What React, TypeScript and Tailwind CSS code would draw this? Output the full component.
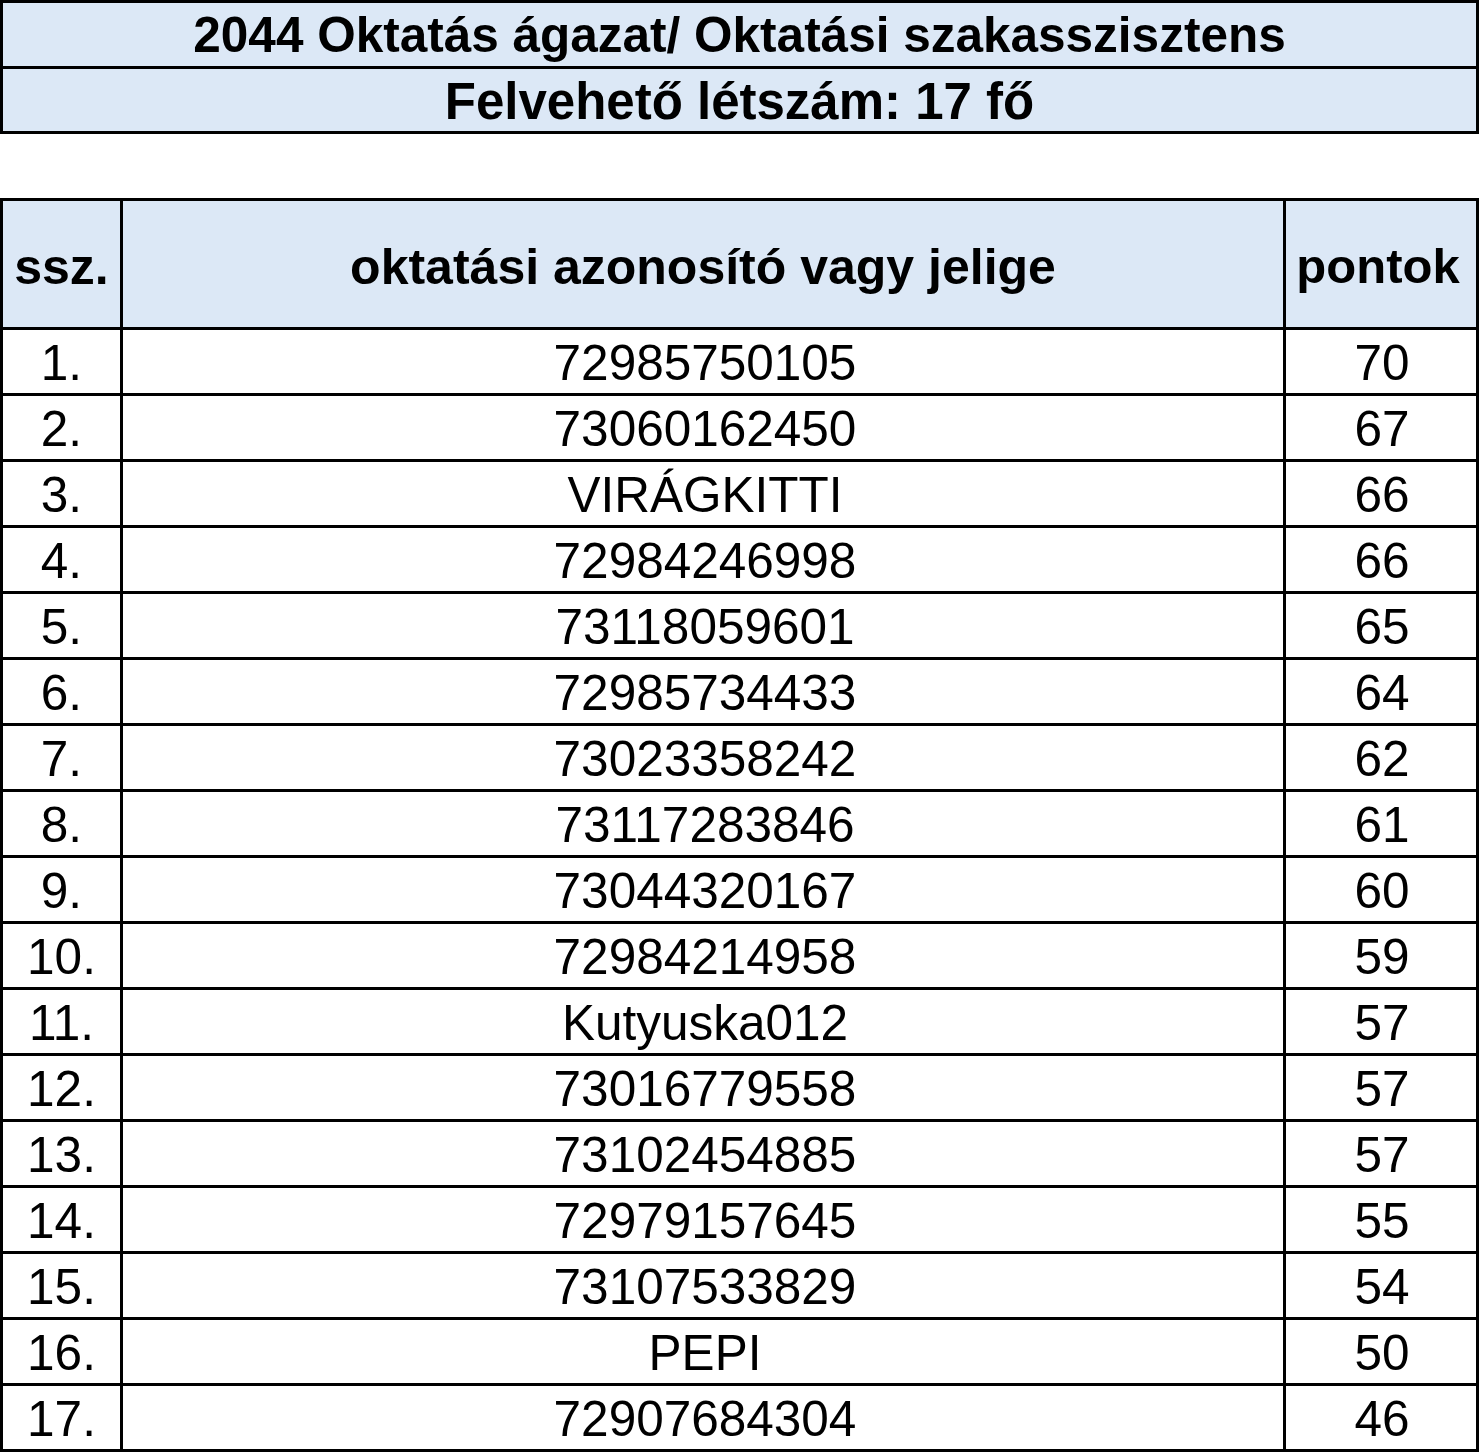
import React from 'react';

const rows: [string, string, number][] = [
  ['1.', '72985750105', 70],
  ['2.', '73060162450', 67],
  ['3.', 'VIRÁGKITTI', 66],
  ['4.', '72984246998', 66],
  ['5.', '73118059601', 65],
  ['6.', '72985734433', 64],
  ['7.', '73023358242', 62],
  ['8.', '73117283846', 61],
  ['9.', '73044320167', 60],
  ['10.', '72984214958', 59],
  ['11.', 'Kutyuska012', 57],
  ['12.', '73016779558', 57],
  ['13.', '73102454885', 57],
  ['14.', '72979157645', 55],
  ['15.', '73107533829', 54],
  ['16.', 'PEPI', 50],
  ['17.', '72907684304', 46],
];

const App = () => (
  <div
    className="bg-white w-[1480px] min-h-[1455px] text-black"
    style={{ fontFamily: '"Liberation Sans", Arial, sans-serif' }}
  >
    <div className="w-[1479px] bg-black p-[3px] flex flex-col gap-[3px]">
      <div className="h-[63px] bg-[#dce8f6] flex items-center justify-center text-[49.5px] font-bold leading-none">
        2044 Oktatás ágazat/ Oktatási szakasszisztens
      </div>
      <div className="h-[62px] bg-[#dce8f6] flex items-center justify-center text-[51px] font-bold leading-none pt-[2px]">
        Felvehető létszám: 17 fő
      </div>
    </div>

    <div className="mt-[64px] w-[1479px] bg-black p-[3px] grid grid-cols-[117px_1160px_190px] gap-[3px]">
      <div className="h-[126px] bg-[#dce8f6] flex items-center justify-center text-[50px] font-bold pt-[6px]">ssz.</div>
      <div className="h-[126px] bg-[#dce8f6] flex items-center justify-center text-[50px] font-bold pt-[6px]">
        oktatási azonosító vagy jelige
      </div>
      <div className="h-[126px] bg-[#dce8f6] flex items-center justify-center text-[49px] font-bold pt-[6px] pr-[6px]">pontok</div>
      {rows.map(([n, id, p]) => (
        <React.Fragment key={n}>
          <div className="h-[63px] bg-white flex items-center justify-center text-[49.5px] leading-none pt-[2px]">{n}</div>
          <div className="h-[63px] bg-white flex items-center justify-center text-[49.5px] leading-none pt-[2px] pl-[4px]">{id}</div>
          <div className="h-[63px] bg-white flex items-center justify-center text-[49.5px] leading-none pt-[2px] pl-[2px]">{p}</div>
        </React.Fragment>
      ))}
    </div>
  </div>
);

export default App;
